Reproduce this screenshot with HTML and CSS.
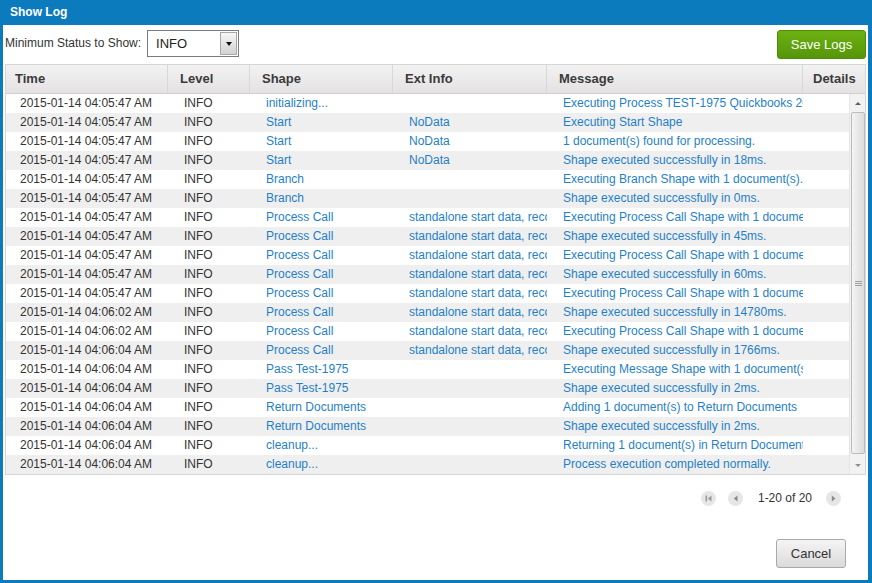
FILE: index.html
```html
<!DOCTYPE html>
<html>
<head>
<meta charset="utf-8">
<title>Show Log</title>
<link rel="stylesheet" href="styles.css">
</head>
<body>
<div class="dialog">
  <div class="titlebar">Show Log</div>
  <div class="content">
    <div class="toolbar">
      <label class="status-label">Minimum Status to Show:</label>
      <div class="select">
        <span class="select-value">INFO</span>
        <span class="select-btn"><span class="caret"></span></span>
      </div>
      <div class="spacer"></div>
      <button class="btn-green">Save Logs</button>
    </div>

    <div class="grid">
      <div class="grid-head">
        <div class="hcell first">Time</div>
        <div class="hcell">Level</div>
        <div class="hcell">Shape</div>
        <div class="hcell">Ext Info</div>
        <div class="hcell">Message</div>
        <div class="hcell last">Details</div>
      </div>
      <div class="grid-body">
        <div class="rows">
          <div class="row"><span class="c time">2015-01-14 04:05:47 AM</span><span class="c">INFO</span><span class="c link">initializing...</span><span class="c link"></span><span class="c link msg">Executing Process TEST-1975 Quickbooks 2014 Sync</span></div>
          <div class="row"><span class="c time">2015-01-14 04:05:47 AM</span><span class="c">INFO</span><span class="c link">Start</span><span class="c link">NoData</span><span class="c link msg">Executing Start Shape</span></div>
          <div class="row"><span class="c time">2015-01-14 04:05:47 AM</span><span class="c">INFO</span><span class="c link">Start</span><span class="c link">NoData</span><span class="c link msg">1 document(s) found for processing.</span></div>
          <div class="row"><span class="c time">2015-01-14 04:05:47 AM</span><span class="c">INFO</span><span class="c link">Start</span><span class="c link">NoData</span><span class="c link msg">Shape executed successfully in 18ms.</span></div>
          <div class="row"><span class="c time">2015-01-14 04:05:47 AM</span><span class="c">INFO</span><span class="c link">Branch</span><span class="c link"></span><span class="c link msg">Executing Branch Shape with 1 document(s).</span></div>
          <div class="row"><span class="c time">2015-01-14 04:05:47 AM</span><span class="c">INFO</span><span class="c link">Branch</span><span class="c link"></span><span class="c link msg">Shape executed successfully in 0ms.</span></div>
          <div class="row"><span class="c time">2015-01-14 04:05:47 AM</span><span class="c">INFO</span><span class="c link">Process Call</span><span class="c link">standalone start data, record 1</span><span class="c link msg">Executing Process Call Shape with 1 document(s).</span></div>
          <div class="row"><span class="c time">2015-01-14 04:05:47 AM</span><span class="c">INFO</span><span class="c link">Process Call</span><span class="c link">standalone start data, record 1</span><span class="c link msg">Shape executed successfully in 45ms.</span></div>
          <div class="row"><span class="c time">2015-01-14 04:05:47 AM</span><span class="c">INFO</span><span class="c link">Process Call</span><span class="c link">standalone start data, record 1</span><span class="c link msg">Executing Process Call Shape with 1 document(s).</span></div>
          <div class="row"><span class="c time">2015-01-14 04:05:47 AM</span><span class="c">INFO</span><span class="c link">Process Call</span><span class="c link">standalone start data, record 1</span><span class="c link msg">Shape executed successfully in 60ms.</span></div>
          <div class="row"><span class="c time">2015-01-14 04:05:47 AM</span><span class="c">INFO</span><span class="c link">Process Call</span><span class="c link">standalone start data, record 1</span><span class="c link msg">Executing Process Call Shape with 1 document(s).</span></div>
          <div class="row"><span class="c time">2015-01-14 04:06:02 AM</span><span class="c">INFO</span><span class="c link">Process Call</span><span class="c link">standalone start data, record 1</span><span class="c link msg">Shape executed successfully in 14780ms.</span></div>
          <div class="row"><span class="c time">2015-01-14 04:06:02 AM</span><span class="c">INFO</span><span class="c link">Process Call</span><span class="c link">standalone start data, record 1</span><span class="c link msg">Executing Process Call Shape with 1 document(s).</span></div>
          <div class="row"><span class="c time">2015-01-14 04:06:04 AM</span><span class="c">INFO</span><span class="c link">Process Call</span><span class="c link">standalone start data, record 1</span><span class="c link msg">Shape executed successfully in 1766ms.</span></div>
          <div class="row"><span class="c time">2015-01-14 04:06:04 AM</span><span class="c">INFO</span><span class="c link">Pass Test-1975</span><span class="c link"></span><span class="c link msg">Executing Message Shape with 1 document(s).</span></div>
          <div class="row"><span class="c time">2015-01-14 04:06:04 AM</span><span class="c">INFO</span><span class="c link">Pass Test-1975</span><span class="c link"></span><span class="c link msg">Shape executed successfully in 2ms.</span></div>
          <div class="row"><span class="c time">2015-01-14 04:06:04 AM</span><span class="c">INFO</span><span class="c link">Return Documents</span><span class="c link"></span><span class="c link msg">Adding 1 document(s) to Return Documents</span></div>
          <div class="row"><span class="c time">2015-01-14 04:06:04 AM</span><span class="c">INFO</span><span class="c link">Return Documents</span><span class="c link"></span><span class="c link msg">Shape executed successfully in 2ms.</span></div>
          <div class="row"><span class="c time">2015-01-14 04:06:04 AM</span><span class="c">INFO</span><span class="c link">cleanup...</span><span class="c link"></span><span class="c link msg">Returning 1 document(s) in Return Documents</span></div>
          <div class="row"><span class="c time">2015-01-14 04:06:04 AM</span><span class="c">INFO</span><span class="c link">cleanup...</span><span class="c link"></span><span class="c link msg">Process execution completed normally.</span></div>
        </div>
        <div class="scrollbar">
          <div class="sb-arrow up"></div>
          <div class="sb-thumb"><span class="grip"></span></div>
          <div class="sb-arrow down"></div>
        </div>
      </div>
    </div>

    <div class="pager">
      <span class="pg-btn"><svg width="15" height="15" viewBox="0 0 15 15"><circle cx="7.5" cy="7.5" r="7.5" fill="#e6e6e6"/><rect x="4.5" y="4.5" width="1.6" height="6" fill="#9a9a9a"/><path d="M10.5 4.5 L6.8 7.5 L10.5 10.5 Z" fill="#9a9a9a"/></svg></span>
      <span class="pg-btn"><svg width="15" height="15" viewBox="0 0 15 15"><circle cx="7.5" cy="7.5" r="7.5" fill="#e6e6e6"/><path d="M9.5 4.5 L5.8 7.5 L9.5 10.5 Z" fill="#8a8a8a"/></svg></span>
      <span class="pg-text">1-20 of 20</span>
      <span class="pg-btn"><svg width="15" height="15" viewBox="0 0 15 15"><circle cx="7.5" cy="7.5" r="7.5" fill="#e6e6e6"/><path d="M5.8 4.5 L9.5 7.5 L5.8 10.5 Z" fill="#8a8a8a"/></svg></span>
    </div>

    <div class="footer">
      <button class="btn-gray">Cancel</button>
    </div>
  </div>
</div>
</body>
</html>
```

FILE: styles.css
```css
* { box-sizing: border-box; }
html, body { margin: 0; padding: 0; }
body {
  font-family: "Liberation Sans", Arial, sans-serif;
  font-size: 12px;
  color: #333;
  background: #0b7bbd;
}
.dialog {
  width: 872px;
  height: 583px;
  background: #0b7bbd;
  padding: 0 4px 3px 3px;
  display: flex;
  flex-direction: column;
}
.titlebar {
  height: 25px;
  line-height: 25px;
  padding-left: 7px;
  color: #fff;
  font-weight: bold;
  font-size: 12px;
}
.content {
  flex: 1;
  background: #fff;
  padding: 5px 2px 0 2px;
  display: flex;
  flex-direction: column;
}
.toolbar {
  display: flex;
  align-items: flex-start;
  height: 29px;
}
.status-label {
  font-size: 12px;
  color: #333;
  line-height: 27px;
  margin-right: 6px;
}
.select {
  width: 92px;
  height: 27px;
  border: 1px solid #7b7b7b;
  display: flex;
  align-items: center;
  background: #fff;
}
.select-value {
  flex: 1;
  padding-left: 8px;
  font-size: 13px;
  color: #222;
}
.select-btn {
  width: 17px;
  height: 23px;
  margin-right: 1px;
  border: 1px solid #a8a8a8;
  background: linear-gradient(to bottom, #f6f6f6, #d2d2d2);
  display: flex;
  align-items: center;
  justify-content: center;
}
.caret {
  width: 0;
  height: 0;
  border-left: 3px solid transparent;
  border-right: 3px solid transparent;
  border-top: 4px solid #111;
}
.spacer { flex: 1; }
.btn-green {
  width: 89px;
  height: 29px;
  border: 1px solid #4f8d05;
  border-radius: 3px;
  background: linear-gradient(to bottom, #6cb012, #55960a);
  color: #fff;
  font-family: "Liberation Sans", Arial, sans-serif;
  font-size: 13px;
  padding: 0;
}
.grid {
  margin-top: 5px;
  border: 1px solid #d6d6d6;
  display: flex;
  flex-direction: column;
}
.grid-head {
  display: grid;
  grid-template-columns: 162px 82px 143px 154px 256px 1fr;
  height: 29px;
  background: linear-gradient(to bottom, #f3f2f2, #e4e2e2);
  border-bottom: 1px solid #d0d0d0;
}
.hcell {
  font-weight: bold;
  font-size: 13px;
  color: #3b3b3b;
  line-height: 28px;
  padding-left: 12px;
  border-right: 1px solid #d8d8d8;
  white-space: nowrap;
  overflow: hidden;
}
.hcell.first { padding-left: 9px; }
.hcell.last { border-right: none; padding-left: 10px; }
.grid-body {
  display: flex;
  height: 380px;
}
.rows {
  flex: 1;
  display: flex;
  flex-direction: column;
}
.row {
  display: grid;
  grid-template-columns: 162px 82px 143px 154px 256px 1fr;
  height: 19px;
  line-height: 19px;
}
.row:nth-child(even) { background: #efefef; }
.c {
  padding-left: 16px;
  white-space: nowrap;
  overflow: hidden;
  color: #333;
}
.c.time { padding-left: 14px; }
.c.link { color: #1f7fc8; }
.scrollbar {
  width: 16px;
  background: #f2f2f2;
  border-left: 1px solid #e6e6e6;
  display: flex;
  flex-direction: column;
}
.sb-arrow {
  height: 18px;
  display: flex;
  align-items: center;
  justify-content: center;
}
.sb-arrow::after {
  content: "";
  width: 0;
  height: 0;
  border-left: 3px solid transparent;
  border-right: 3px solid transparent;
}
.sb-arrow.up::after { border-bottom: 3px solid #606060; }
.sb-arrow.down::after { border-top: 3px solid #909090; }
.sb-thumb {
  flex: 1;
  margin: 0 0 2px 1px;
  border: 1px solid #bcbcbc;
  border-radius: 2px;
  background: linear-gradient(to right, #f4f4f4, #dcdcdc);
  display: flex;
  align-items: center;
  justify-content: center;
}
.grip {
  width: 7px;
  height: 5px;
  border-top: 1px solid #a0a0a0;
  border-bottom: 1px solid #a0a0a0;
  position: relative;
}
.grip::after {
  content: "";
  position: absolute;
  left: 0;
  right: 0;
  top: 1px;
  border-top: 1px solid #a0a0a0;
}
.pager {
  display: flex;
  justify-content: flex-end;
  align-items: center;
  margin-top: 15px;
  padding-right: 25px;
  height: 16px;
}
.pg-btn {
  width: 15px;
  height: 15px;
  display: flex;
  margin-left: 12px;
}
.pg-text {
  font-size: 12px;
  color: #333;
  margin: 0 2px 0 15px;
}
.footer {
  display: flex;
  justify-content: flex-end;
  padding-right: 20px;
  margin-top: 33px;
}
.btn-gray {
  width: 70px;
  height: 29px;
  border: 1px solid #a9a9a9;
  border-radius: 3px;
  background: linear-gradient(to bottom, #f5f5f5, #dadada);
  color: #333;
  font-family: "Liberation Sans", Arial, sans-serif;
  font-size: 13px;
  padding: 0;
}
```
